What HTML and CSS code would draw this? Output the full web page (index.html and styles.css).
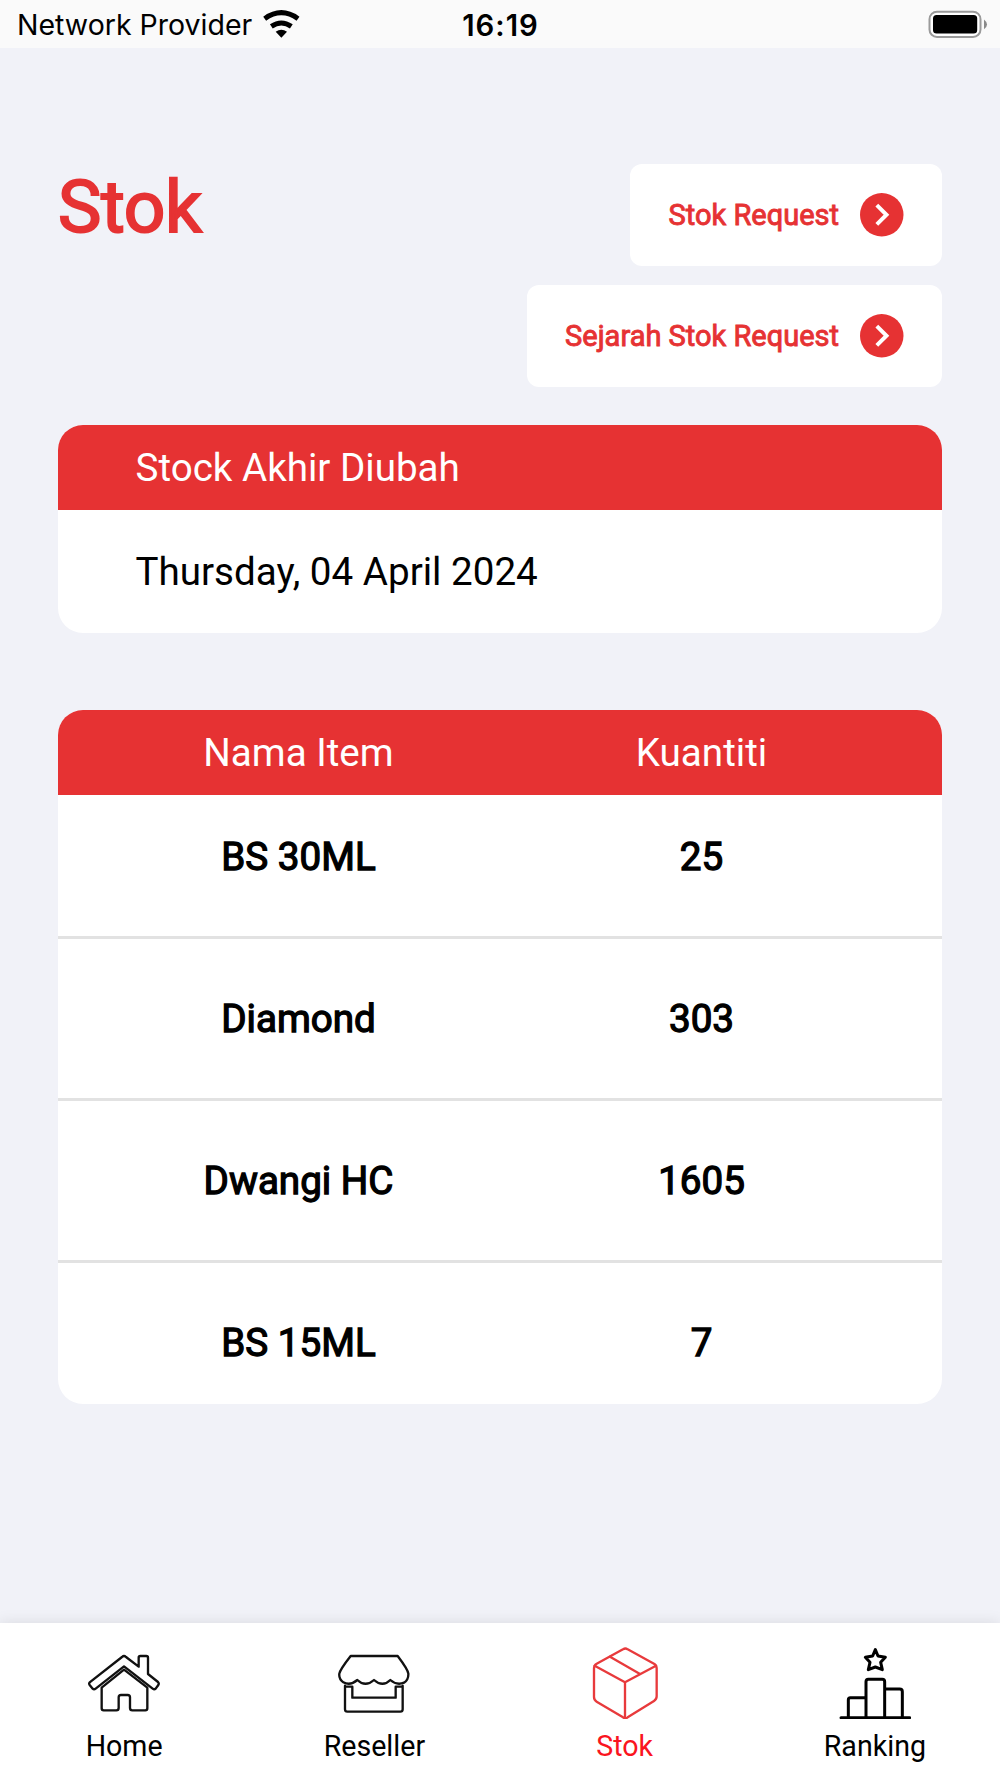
FILE: index.html
```html
<!DOCTYPE html>
<html lang="id">
<head>
    <meta charset="UTF-8">
    <meta name="viewport" content="width=device-width, initial-scale=1.0">
    <title>Stok</title>
    <link rel="stylesheet" href="styles.css">
</head>
<body>
    <header class="status-bar">
        <div class="provider">
            <span>Network Provider</span>
            <svg class="wifi" viewBox="788 28 110 84">
                <path d="M793 54Q843 18 893 54" fill="none" stroke="#000" stroke-width="15"/>
                <path d="M813 77Q843 57 873 77" fill="none" stroke="#000" stroke-width="15"/>
                <path d="M826 93Q843 81 860 93L843 111Z"/>
            </svg>
        </div>
        <div class="clock">16:19</div>
        <div class="battery">
            <svg width="60" height="30" viewBox="0 0 60 30">
                <rect x="1.5" y="1.7" width="51" height="25.2" rx="7.5" fill="#fff" stroke="#9a9a9a" stroke-width="2"/>
                <rect x="5" y="5" width="44.2" height="18.4" rx="3.5"/>
                <path d="M56 9.5Q62 14.4 56 19.3Z" fill="#8a8a8a"/>
            </svg>
        </div>
    </header>

    <main>
        <div class="top">
            <h1>Stok</h1>
            <div class="buttons">
                <a class="btn">
                    <span>Stok Request</span>
                    <svg class="arrow" viewBox="0 0 44 44">
                        <circle cx="22" cy="22" r="22"/>
                        <path d="M17 12.2L26.8 22L17 31.8"/>
                    </svg>
                </a>
                <a class="btn">
                    <span>Sejarah Stok Request</span>
                    <svg class="arrow" viewBox="0 0 44 44">
                        <circle cx="22" cy="22" r="22"/>
                        <path d="M17 12.2L26.8 22L17 31.8"/>
                    </svg>
                </a>
            </div>
        </div>

        <section class="card date-card">
            <div class="card-head"><span>Stock Akhir Diubah</span></div>
            <div class="card-body"><span>Thursday, 04 April 2024</span></div>
        </section>

        <section class="card items">
            <div class="card-head">
                <span>Nama Item</span>
                <span>Kuantiti</span>
            </div>
            <div class="row"><span>BS 30ML</span><span>25</span></div>
            <div class="row"><span>Diamond</span><span>303</span></div>
            <div class="row"><span>Dwangi HC</span><span>1605</span></div>
            <div class="row"><span>BS 15ML</span><span>7</span></div>
        </section>
    </main>

    <nav class="tabs">
        <a class="tab">
            <svg viewBox="85 110 216 216">
                <path d="M90 216Q87 220 90 224L99 235Q103 239 108 235L193 168L279 235Q284 239 288 235L296 224Q299 219 295 215L265 191V142Q265 137 260 137H242Q237 137 237 142V169L199 140Q193 134 187 140Z"/>
                <path d="M126 232V294Q126 300 132 300H170Q177 300 177 293V261Q177 254 184 254H204Q211 254 211 261V293Q211 300 218 300H257Q263 300 263 294V232L193 178Z"/>
            </svg>
            <span>Home</span>
        </a>
        <a class="tab">
            <svg viewBox="836 110 216 216">
                <path d="M874 137H1015Q1046 178 1047 190Q1048 208 1034 217Q1012 226 993 209Q970 232 944 209Q918 232 894 209Q873 227 852 216Q838 206 840 190Q842 178 874 137Z"/>
                <path d="M857 226V297Q857 304 864 304H1023Q1030 304 1030 297V226M857 229H879V262H1009V229H1030"/>
            </svg>
            <span>Reseller</span>
        </a>
        <a class="tab active">
            <svg viewBox="86 110 216 216">
                <path d="M188 117Q195 112 202 117L281 160Q289 165 289 174V258Q289 267 281 272L202 321Q195 326 188 321L109 274Q101 269 101 260V174Q101 165 109 160Z"/>
                <path d="M103 166L194 216L287 166M194 216V323M149 139L239 191"/>
            </svg>
            <span>Stok</span>
        </a>
        <a class="tab ranking">
            <svg viewBox="836 110 216 216">
                <path d="M945 118L953 137L975 141L961 156L966 178L945 170L924 178L929 156L915 141L937 137Z"/>
                <path d="M842 322H1048M864 322V268Q864 262 870 262H916M917 322V214Q917 207 924 207H966Q973 207 973 214V322M973 236H1018Q1026 236 1026 244V322"/>
            </svg>
            <span>Ranking</span>
        </a>
    </nav>
</body>
</html>
```
FILE: styles.css
```css
* {
    box-sizing: border-box;
}

body {
    margin: 0;
    height: 1778px;
    display: flex;
    flex-direction: column;
    background-color: #f1f2f8;
    font-family: Roboto, "Liberation Sans", sans-serif;
    color: #000;
    overflow: hidden;
}

svg {
    display: block;
}

.status-bar {
    display: flex;
    align-items: center;
    height: 48px;
    padding: 2px 17px 0;
    background-color: #fafafa;
    font-family: Inter, sans-serif;
    font-size: 28.5px;
    line-height: 48px;
}

.provider,
.battery {
    flex: 1;
    display: flex;
}

.provider {
    align-items: center;
    gap: 11px;
    white-space: nowrap;
}

.wifi {
    width: 36.7px;
    height: 28px;
    margin-bottom: 3px;
}

.clock {
    padding: 1px 4px 0 0;
    font-size: 29.3px;
    font-weight: 600;
    letter-spacing: 1px;
}

.battery {
    justify-content: flex-end;
    margin-right: -5px;
}

main {
    flex: 1;
    padding: 116px 58px 0;
}

.top {
    display: flex;
    justify-content: space-between;
}

h1 {
    margin: 0;
    padding-top: 5px;
    font-size: 73px;
    font-weight: 400;
    line-height: 76px;
    letter-spacing: -0.4px;
    color: #e63233;
    -webkit-text-stroke: 2px #e63233;
}

.buttons {
    display: flex;
    flex-direction: column;
    align-items: flex-end;
    gap: 19px;
}

.btn {
    display: flex;
    align-items: center;
    gap: 21px;
    height: 102px;
    padding: 0 38.5px;
    border-radius: 12px;
    background-color: #fff;
    color: #e63233;
    font-size: 29px;
    -webkit-text-stroke: 0.9px #e63233;
}

.arrow {
    width: 43.5px;
    height: 43.5px;
    fill: #e63233;
}

.arrow path {
    fill: none;
    stroke: #fff;
    stroke-width: 4;
}

.card {
    overflow: hidden;
    border-radius: 25px;
    background-color: #fff;
    font-size: 38.6px;
}

.card-head {
    display: flex;
    align-items: center;
    height: 85px;
    background-color: #e63233;
    color: #fff;
}

.date-card {
    margin-top: 38px;
}

.date-card .card-head,
.date-card .card-body {
    padding-left: 77.5px;
}

.card-body {
    height: 123px;
    line-height: 123px;
}

.items {
    margin-top: 77px;
}

.items .card-head,
.row {
    padding: 0 39px;
}

.items span {
    flex: 1;
    text-align: center;
}

.row {
    display: flex;
    align-items: center;
    height: 162px;
    border-bottom: 3px solid #e2e2e2;
    -webkit-text-stroke: 1.3px #000;
}

.row:nth-child(2) {
    height: 144px;
    padding-bottom: 18px;
}

.row:last-child {
    height: 141px;
    padding-top: 17px;
    border-bottom: none;
}

.tabs {
    display: flex;
    height: 155px;
    margin-left: -1px;
    background-color: #fff;
    box-shadow: 0 0 14px rgba(0, 0, 0, 0.1);
}

.tab {
    flex: 1;
    display: flex;
    flex-direction: column;
    align-items: center;
    padding-top: 24px;
    font-size: 28.6px;
    line-height: 32px;
}

.tab svg {
    width: 72px;
    height: 72px;
    margin-bottom: 11px;
    fill: none;
    stroke: #111;
    stroke-width: 7;
    stroke-linejoin: round;
    stroke-linecap: round;
}

.ranking svg {
    stroke: #000;
    stroke-width: 9;
}

.active {
    color: #fa1420;
}

.active svg {
    stroke: #e83a3c;
}
```
